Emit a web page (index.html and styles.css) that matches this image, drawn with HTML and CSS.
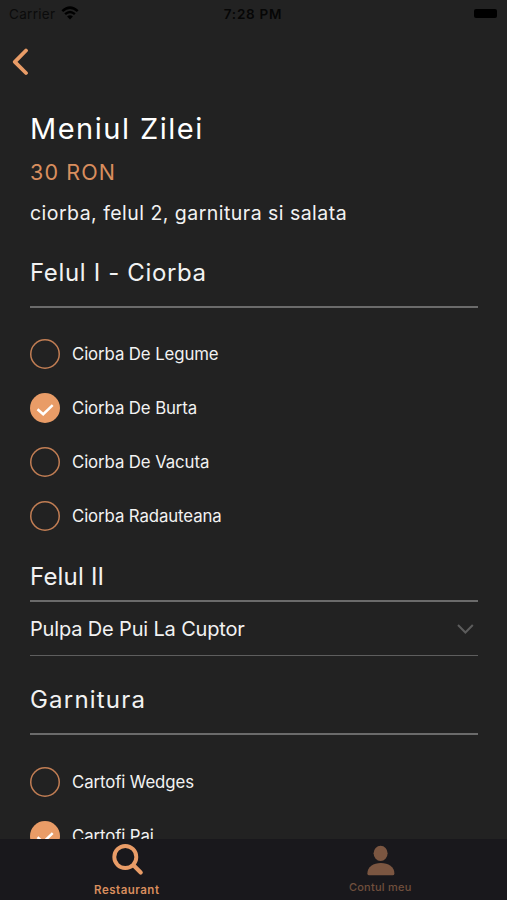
FILE: index.html
```html
<!DOCTYPE html>
<html lang="ro">
<head>
<meta charset="utf-8">
<title>Meniul Zilei</title>
<link rel="stylesheet" href="styles.css">
</head>
<body>
<div class="screen">
  <header class="status">
    <div class="carrier"><span class="carrier-name">Carrier</span>
      <svg width="18" height="14" viewBox="0 0 18 14"><path d="M1.3 5.2Q9-2 16.7 5.2" fill="none" stroke="#000" stroke-width="2.5"/><path d="M4.1 8.2Q9 3.8 13.9 8.2" fill="none" stroke="#000" stroke-width="2.4"/><path d="M6.1 10.4Q9 8 11.9 10.4L9 13.4Z"/></svg>
    </div>
    <span class="time">7:28 PM</span>
    <div class="battery"><span class="battery-body"></span></div>
  </header>
  <nav class="back"><svg width="18" height="28" viewBox="0 0 18 28"><path d="M14 2.5L2.8 13.8L14 25" fill="none" stroke="#e99c67" stroke-width="3.8" stroke-linecap="round" stroke-linejoin="round"/></svg></nav>
  <main class="content">
    <h1 class="title"><span>Meniul Zilei</span></h1>
    <p class="price"><span>30 RON</span></p>
    <p class="desc"><span>ciorba, felul 2, garnitura si salata</span></p>
    <h2 class="section first"><span>Felul I - Ciorba</span></h2>
    <ul class="options">
      <li><i class="radio"></i><span>Ciorba De Legume</span></li>
      <li><i class="radio on"><svg width="30" height="30" viewBox="0 0 30 30"><path d="M7.5 16.2L13.2 21.2L22.7 12.2" /></svg></i><span>Ciorba De Burta</span></li>
      <li><i class="radio"></i><span>Ciorba De Vacuta</span></li>
      <li><i class="radio"></i><span>Ciorba Radauteana</span></li>
    </ul>
    <h2 class="section second"><span>Felul II</span></h2>
    <div class="select"><span>Pulpa De Pui La Cuptor</span><svg width="18" height="12" viewBox="0 0 18 12"><path d="M1 2L8.4 9.5L15.8 2" fill="none" stroke="#5c5c5c" stroke-width="2"/></svg></div>
    <h2 class="section third"><span>Garnitura</span></h2>
    <ul class="options">
      <li><i class="radio"></i><span>Cartofi Wedges</span></li>
      <li><i class="radio on"><svg width="30" height="30" viewBox="0 0 30 30"><path d="M7.5 16.2L13.2 21.2L22.7 12.2" /></svg></i><span>Cartofi Pai</span></li>
    </ul>
  </main>
  <footer class="tabs">
    <div class="tab active"><svg width="34" height="34" viewBox="0 0 34 34"><circle cx="15.3" cy="14" r="11" fill="none" stroke="#e99c67" stroke-width="3.9"/><path d="M23.5 22.2L30.7 29.4" stroke="#e99c67" stroke-width="4.2" stroke-linecap="round"/></svg><span>Restaurant</span></div>
    <div class="tab"><svg width="34" height="34" viewBox="0 0 34 34"><ellipse cx="17.6" cy="10.3" rx="7" ry="7.6" fill="#7b5641"/><path d="M4.4 30.4C4.4 24 10.4 20 17.9 20S31.4 24 31.4 30.4Q31.4 32.3 29.6 32.3H6.2Q4.4 32.3 4.4 30.4Z" fill="#7b5641"/></svg><span>Contul meu</span></div>
  </footer>
</div>
</body>
</html>
```
FILE: styles.css
```css
* { box-sizing: border-box; }
body { margin: 0; background: #222; font-family: Inter, "Liberation Sans", sans-serif; }
.screen { width: 507px; height: 900px; display: flex; flex-direction: column; overflow: hidden; background: #222; color: #f2f2f2; }
span { white-space: nowrap; }
svg { display: block; flex: none; }
.status { height: 28px; flex: none; display: grid; grid-template-columns: 1fr auto 1fr; align-items: center; padding: 0 10px 0 9px; color: #060606; font-size: 13.5px; }
.carrier { display: flex; align-items: center; gap: 6px; color: #0b0b0b; }
.carrier-name { letter-spacing: .3px; }
.carrier svg { margin-top: -3px; }
.time { font-weight: 600; letter-spacing: .75px; }
.battery { display: flex; justify-content: flex-end; }
.battery-body { width: 23px; height: 9px; border-radius: 2px; background: #000; margin-top: -1px; }
.back { height: 82px; flex: none; padding: 20px 0 0 12px; }
.content { flex: 1; min-height: 0; overflow: hidden; padding: 0 29px 0 30px; }
h1, h2, p, ul { margin: 0; padding: 0; font-weight: 400; }
.title { height: 38px; line-height: 38px; font-size: 29px; letter-spacing: 1.5px; color: #fff; }
.price { height: 46px; line-height: 48px; font-size: 21.5px; letter-spacing: 1.1px; color: #d98e5e; }
.desc { height: 34px; line-height: 38px; font-size: 19.5px; letter-spacing: .47px; }
.section { font-size: 24px; border-bottom: 2px solid #6b6b6b; }
.first { height: 80px; line-height: 89px; margin-bottom: 19.4px; letter-spacing: .65px; }
.second { height: 59.4px; line-height: 68px; letter-spacing: .2px; }
.third { height: 79px; line-height: 88px; margin-bottom: 20px; letter-spacing: 1.2px; }
.options { list-style: none; }
.options li { height: 53.8px; display: flex; align-items: center; gap: 12px; font-size: 16.8px; letter-spacing: -.1px; }
.radio { width: 30px; height: 30px; flex: none; box-shadow: inset 0 0 0 1.5px #c27e54; border-radius: 50%; }
.radio.on { box-shadow: none; background: #e99c67; }
.radio path { fill: none; stroke: #fff; stroke-width: 2.5; }
.select { height: 54px; display: flex; align-items: center; justify-content: space-between; border-bottom: 1px solid #5e5e5e; padding: 1px 3px 0 0; font-size: 20px; letter-spacing: -.16px; }
.tabs { height: 61px; flex: none; display: grid; grid-template-columns: 1fr 1fr; background: #19181c; }
.tab { display: flex; flex-direction: column; align-items: center; padding-top: 4px; color: #704f3c; font-size: 11px; font-weight: 500; line-height: 14px; letter-spacing: .25px; }
.tab span { margin-top: 3px; }
.active { color: #d98e5e; font-weight: 600; font-size: 11.5px; letter-spacing: .5px; }
.active span { margin-top: 6px; }
```
